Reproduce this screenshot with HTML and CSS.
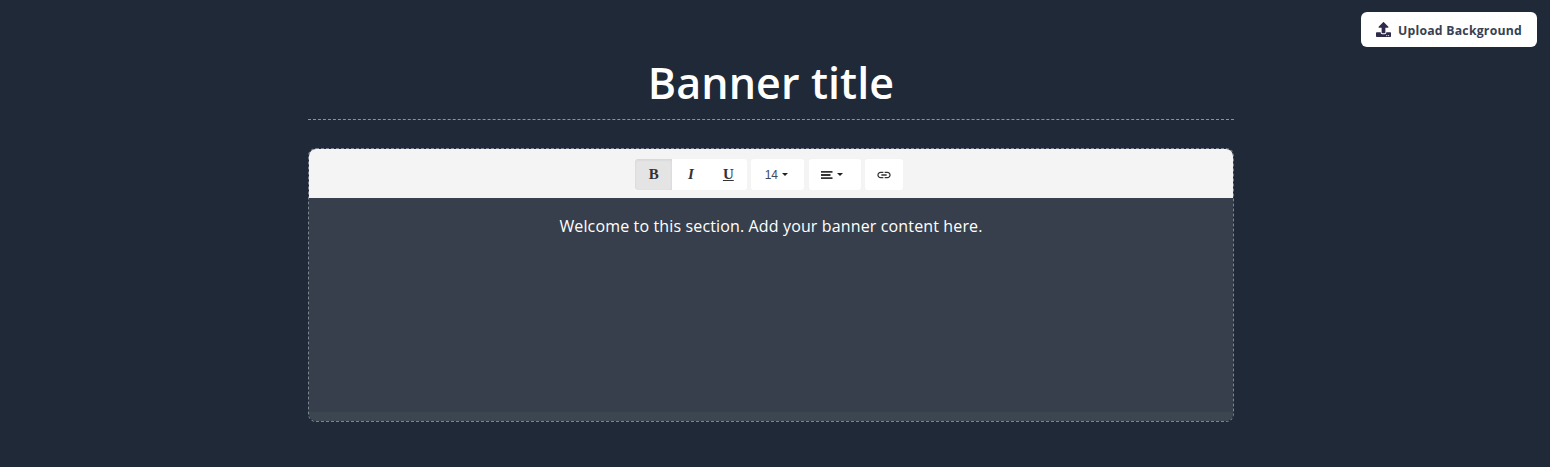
FILE: index.html
```html
<!DOCTYPE html>
<html lang="en">
<head>
<meta charset="utf-8">
<title>Banner</title>
<link rel="stylesheet" href="styles.css">
</head>
<body>
<section class="banner">
  <button class="upload" type="button">
    <svg class="upload-icon" viewBox="0 0 512 512" width="15" height="15" aria-hidden="true"><path d="M296 384h-80c-13.300 0-24-10.700-24-24V192h-87.700c-17.800 0-26.700-21.500-14.100-34.100L242.300 5.700c7.500-7.500 19.800-7.500 27.300 0l152.200 152.200c12.600 12.600 3.700 34.100-14.100 34.100H320v168c0 13.300-10.700 24-24 24zm216-8v112c0 13.300-10.700 24-24 24H24c-13.300 0-24-10.700-24-24V376c0-13.300 10.700-24 24-24h136v8c0 30.900 25.100 56 56 56h80c30.900 0 56-25.100 56-56v-8h136c13.300 0 24 10.700 24 24zm-124 88c0-11-9-20-20-20s-20 9-20 20 9 20 20 20 20-9 20-20zm64 0c0-11-9-20-20-20s-20 9-20 20 9 20 20 20 20-9 20-20z" fill="#2d2a4a"/></svg>
    <span class="upload-label">Upload Background</span>
  </button>
  <div class="inner">
    <h1 class="title">Banner title</h1>
    <div class="editor">
      <div class="toolbar">
        <div class="group">
          <span class="tool active fmt b">B</span><span class="tool fmt i">I</span><span class="tool fmt u">U</span>
        </div>
        <div class="group"><span class="tool size">14<i class="caret"></i></span></div>
        <div class="group"><span class="tool align"><svg viewBox="0 0 11.500 8" width="11.500" height="8" aria-hidden="true"><path d="M0 0h11.500v1.800H0zM0 3.100h9.500v1.800H0zM0 6.200h11.500V8H0z" fill="#333"/></svg><i class="caret"></i></span></div>
        <div class="group"><span class="tool link"><svg viewBox="0 0 24 24" width="16" height="16" aria-hidden="true"><path d="M3.900 12c0-1.700 1.400-3.100 3.100-3.100h4V7H7c-2.800 0-5 2.200-5 5s2.200 5 5 5h4v-1.900H7c-1.700 0-3.100-1.400-3.100-3.100zM8 13h8v-2H8v2zm9-6h-4v1.900h4c1.700 0 3.100 1.400 3.100 3.100s-1.400 3.100-3.100 3.100h-4V17h4c2.800 0 5-2.200 5-5s-2.200-5-5-5z" fill="#333"/></svg></span></div>
      </div>
      <div class="content"><p>Welcome to this section. Add your banner content here.</p></div>
      <div class="statusbar"></div>
    </div>
  </div>
</section>
</body>
</html>
```
FILE: styles.css
```css
* { box-sizing: border-box; }
html, body { margin: 0; height: 100%; }
body { background: #1f2937; font-family: "Open Sans", sans-serif; color: #fff; }
.banner { position: relative; height: 467px; padding: 53px 8px 0 0; }
.upload {
  position: absolute; top: 12px; right: 13px;
  width: 176px; height: 35px;
  display: flex; align-items: center; justify-content: center; gap: 7px;
  background: #fff; border: 0; border-radius: 6px;
  font: 700 12.25px "Open Sans", sans-serif; letter-spacing: 0.23px; color: #374151;
}
.upload-label { padding-top: 1px; }
.inner { width: 926px; margin: 0 auto; }
.title {
  margin: 0 0 28px; height: 67px;
  font-size: 43px; letter-spacing: 0.1px; line-height: 60px; font-weight: 600; text-align: center;
  border-bottom: 1px dashed #8b929c;
}
.editor {
  height: 274px; border: 1px dashed #7d848f; border-radius: 8px; overflow: hidden;
  display: flex; flex-direction: column;
}
.toolbar {
  height: 49px; background: #f4f4f4;
  display: flex; justify-content: center; align-items: center; gap: 4.33px;
  padding: 2px 4px 0 0;
}
.group { display: flex; background: #fff; border-radius: 3px; height: 31px; overflow: hidden; }
.tool {
  display: flex; align-items: center; justify-content: center; gap: 4px;
  height: 31px; color: #333;
}
.fmt { width: 37.33px; font: 700 15px "Liberation Serif", serif; }
.fmt.i { font-style: italic; }
.fmt.u { text-decoration: underline; }
.active { background: #e4e4e4; box-shadow: inset 0 1px 3px rgba(0,0,0,.08); }
.size { width: 53px; padding-right: 3px; color: #3f4a5c; font: 400 12px "Liberation Sans", sans-serif; }
.align { width: 52px; padding-right: 5px; }
.link { width: 38px; }
.caret { width: 0; height: 0; border-left: 3px solid transparent; border-right: 3px solid transparent; border-top: 3.5px solid #222; }
.content { flex: 1; background: #383f4c; text-align: center; padding: 16px 12px 0; }
.content p { margin: 0; font-size: 16px; letter-spacing: 0.14px; line-height: 24px; }
.statusbar { height: 9px; background: #3c4650; }
```
